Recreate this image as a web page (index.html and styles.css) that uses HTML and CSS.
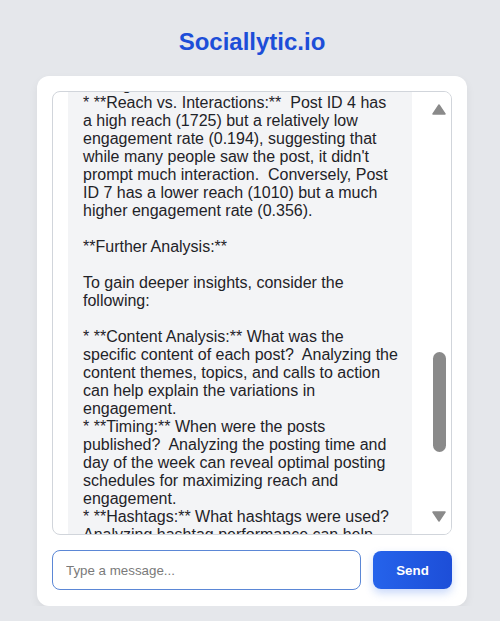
FILE: index.html
```html
<!DOCTYPE html>
<html lang="en">
<head>
<meta charset="utf-8">
<title>Sociallytic.io</title>
<link rel="stylesheet" href="styles.css">
</head>
<body>
<div class="page">
  <h1 class="title">Sociallytic.io</h1>
  <div class="card">
    <div class="chat">
      <div class="chat-scroll">
        <div class="bubble">the highest.
* **Reach vs. Interactions:**  Post ID 4 has
a high reach (1725) but a relatively low
engagement rate (0.194), suggesting that
while many people saw the post, it didn't
prompt much interaction.  Conversely, Post
ID 7 has a lower reach (1010) but a much
higher engagement rate (0.356).

**Further Analysis:**

To gain deeper insights, consider the
following:

* **Content Analysis:** What was the
specific content of each post?  Analyzing the
content themes, topics, and calls to action
can help explain the variations in
engagement.
* **Timing:** When were the posts
published?  Analyzing the posting time and
day of the week can reveal optimal posting
schedules for maximizing reach and
engagement.
* **Hashtags:** What hashtags were used?
Analyzing hashtag performance can help
identify which tags drive the most reach.</div>
      </div>
      <div class="scrollbar" aria-hidden="true">
        <svg class="arrow" width="14" height="11" viewBox="0 0 14 11"><polygon points="7,1 13,10 1,10" fill="#8a8a8a" stroke="#8a8a8a" stroke-width="1.5" stroke-linejoin="round"/></svg>
        <div class="thumb"></div>
        <div class="spacer"></div>
        <svg class="arrow" width="14" height="11" viewBox="0 0 14 11"><polygon points="1,1 13,1 7,10" fill="#8a8a8a" stroke="#8a8a8a" stroke-width="1.5" stroke-linejoin="round"/></svg>
      </div>
    </div>
    <div class="composer">
      <input class="message-input" type="text" placeholder="Type a message..." autofocus>
      <button class="send-btn" type="button">Send</button>
    </div>
  </div>
</div>
</body>
</html>
```

FILE: styles.css
```css
html, body {
  margin: 0;
  padding: 0;
  background: #e5e7eb;
  font-family: "Liberation Sans", Arial, sans-serif;
}

.page {
  padding: 26px 33px 0 37px;
}

.title {
  margin: 0 0 18px;
  text-align: center;
  font-size: 24px;
  line-height: 32px;
  font-weight: 700;
  color: #1d4ed8;
}

.card {
  background: #ffffff;
  border-radius: 12px;
  padding: 15px 15px 16px;
  box-shadow: 0 4px 10px rgba(0, 0, 0, 0.06);
}

.chat {
  height: 444px;
  box-sizing: border-box;
  border: 1px solid #d1d5db;
  border-radius: 8px;
  display: flex;
  overflow: hidden;
  background: #ffffff;
}

.chat-scroll {
  flex: 1;
  overflow: hidden;
  padding: 0 15px;
}

.bubble {
  margin-top: -16px;
  background: #f3f4f6;
  padding: 0 15px 20px;
  white-space: pre;
  font-size: 16px;
  line-height: 18px;
  color: #1f2328;
}

.scrollbar {
  width: 24px;
  flex: none;
  display: flex;
  flex-direction: column;
  align-items: center;
  padding: 12px 0 12px;
  box-sizing: border-box;
  background: #ffffff;
}

.arrow {
  display: block;
  flex: none;
}

.thumb {
  margin-top: 237px;
  width: 13px;
  height: 100px;
  border-radius: 7px;
  background: #8a8a8a;
  flex: none;
}

.spacer {
  flex: 1;
}

.composer {
  margin-top: 15px;
  display: flex;
  align-items: center;
  gap: 12px;
}

.message-input {
  flex: 1;
  height: 40px;
  box-sizing: border-box;
  border: 1px solid #5b87d6;
  border-radius: 8px;
  padding: 0 13px;
  font-family: "Liberation Sans", Arial, sans-serif;
  font-size: 13.333px;
  color: #111;
  outline: none;
  background: #fff;
}

.message-input::placeholder {
  color: #7a7a7a;
}

.send-btn {
  width: 79px;
  height: 38px;
  border: none;
  border-radius: 8px;
  background: linear-gradient(90deg, #2563eb, #1d4ed8);
  color: #ffffff;
  font-family: "Liberation Sans", Arial, sans-serif;
  font-size: 13.333px;
  font-weight: 700;
  box-shadow: 0 4px 8px rgba(37, 99, 235, 0.25);
  cursor: pointer;
}
```
